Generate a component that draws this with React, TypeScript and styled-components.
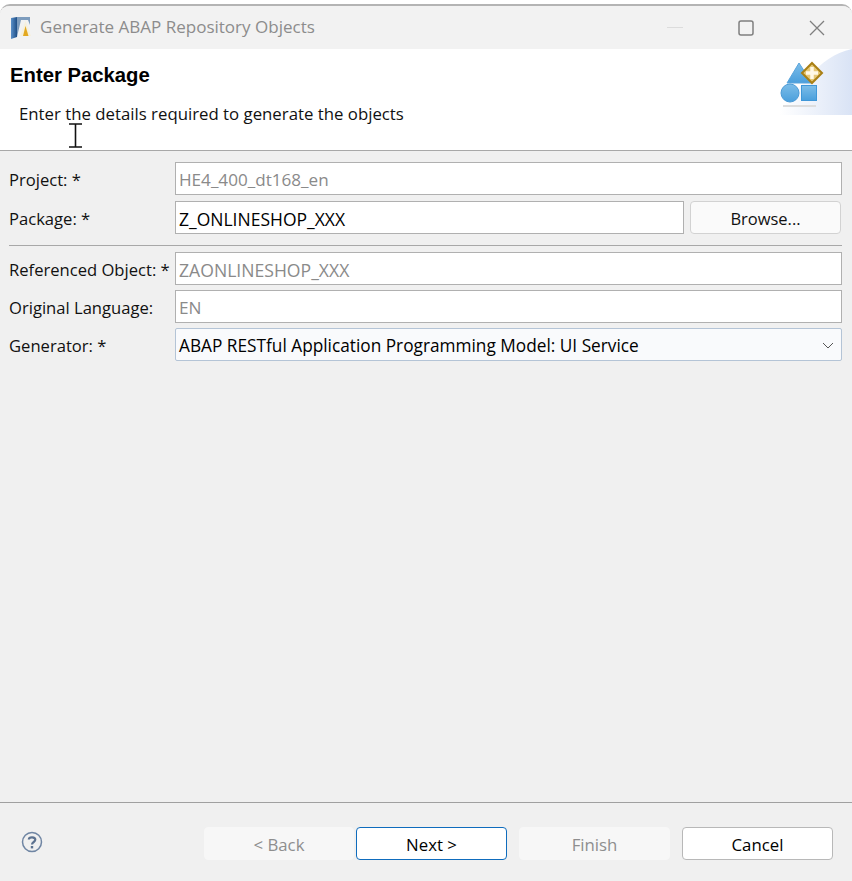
import React from 'react';
import styled, { createGlobalStyle } from 'styled-components';

const GlobalStyle = createGlobalStyle`
  html, body {
    margin: 0;
    padding: 0;
    background: #ffffff;
  }
  body {
    font-family: "Open Sans", "Noto Sans", "Liberation Sans", sans-serif;
  }
`;

const Window = styled.div`
  width: 852px;
  height: 877px;
  margin-top: 4px;
  display: flex;
  flex-direction: column;
  background: #f0f0f0;
  border-top: 2px solid #b4b4b4;
  border-radius: 10px 10px 0 0;
  box-sizing: border-box;
  overflow: hidden;
  position: relative;
`;

const TitleBar = styled.div`
  height: 43px;
  flex: none;
  display: flex;
  align-items: center;
  background: #f2f2f2;
  padding-left: 10px;
`;

const TitleText = styled.div`
  margin-left: 7px;
  margin-top: -2px;
  font-size: 17.05px;
  color: #8c8c8c;
`;

const WindowControls = styled.div`
  margin-left: auto;
  display: flex;
  align-items: center;
`;

const ControlButton = styled.div`
  width: 71px;
  height: 43px;
  display: flex;
  align-items: center;
  justify-content: center;
`;

const Banner = styled.div`
  height: 102px;
  flex: none;
  box-sizing: border-box;
  background: #ffffff;
  border-bottom: 1px solid #a8a8a8;
  padding: 14px 10px 0;
  display: flex;
  position: relative;
`;

const BannerText = styled.div`
  display: flex;
  flex-direction: column;
`;

const BannerTitle = styled.div`
  font-family: "Liberation Sans", Arial, sans-serif;
  font-weight: 700;
  font-size: 20.3px;
  line-height: 24px;
  color: #000000;
`;

const BannerMessage = styled.div`
  margin-top: 15px;
  margin-left: 9px;
  font-size: 16.8px;
  line-height: 24px;
  color: #111111;
`;

const BannerArt = styled.div`
  position: absolute;
  right: 0;
  top: 0;
  width: 76px;
  height: 66px;
`;

const TextCursor = styled.div`
  position: absolute;
  left: 69px;
  top: 74px;
  width: 13px;
  height: 25px;
`;

const Body = styled.div`
  flex: 1;
  display: flex;
  flex-direction: column;
  padding: 11px 10px 0 9px;
`;

const Row = styled.div<{ $gap?: number }>`
  display: flex;
  align-items: center;
  height: 33px;
  margin-bottom: ${(p) => p.$gap ?? 5}px;
`;

const Label = styled.div`
  width: 166px;
  flex: none;
  padding-top: 2px;
  font-size: 16.6px;
  color: #111111;
  white-space: nowrap;
`;

const Field = styled.div<{ $disabled?: boolean; $size?: number }>`
  flex: 1;
  height: 33px;
  box-sizing: border-box;
  display: flex;
  align-items: center;
  padding: 2px 0 0 3px;
  background: #ffffff;
  border: 1px solid #b0b0b0;
  font-size: ${(p) => p.$size ?? 17.2}px;
  color: ${(p) => (p.$disabled ? '#8a8a8a' : '#000000')};
  white-space: nowrap;
`;

const Select = styled(Field)`
  background: #f9fafc;
  border: 1px solid #b4c4d6;
  border-radius: 2px;
  justify-content: space-between;
  padding-right: 7px;
`;

const BrowseButton = styled.div`
  width: 151px;
  height: 33px;
  flex: none;
  margin-left: 6px;
  margin-right: 1px;
  box-sizing: border-box;
  display: flex;
  align-items: center;
  justify-content: center;
  padding-top: 2px;
  background: #fafafa;
  border: 1px solid #d2d2d2;
  border-radius: 4px;
  font-size: 16.5px;
  color: #111111;
`;

const Separator = styled.div`
  height: 1px;
  flex: none;
  background: #a8a8a8;
  margin: 6px 0;
`;

const Footer = styled.div`
  height: 79px;
  flex: none;
  box-sizing: border-box;
  border-top: 1px solid #a0a0a0;
  display: flex;
  align-items: flex-start;
  padding: 24px 0 0 21px;
`;

const HelpIcon = styled.div`
  width: 22px;
  height: 22px;
  flex: none;
  margin-top: 4px;
  margin-right: 161px;
`;

const ActionButton = styled.div<{ $variant?: 'disabled' | 'primary' | 'plain'; $gap?: number; $width?: number }>`
  width: ${(p) => p.$width ?? 151}px;
  height: 33px;
  flex: none;
  box-sizing: border-box;
  margin-left: ${(p) => p.$gap ?? 0}px;
  display: flex;
  align-items: center;
  justify-content: center;
  padding-top: 1px;
  border-radius: 4px;
  font-size: 16.8px;
  background: ${(p) => (p.$variant === 'disabled' ? '#f7f7f7' : '#ffffff')};
  color: ${(p) => (p.$variant === 'disabled' ? '#8e8e8e' : '#000000')};
  border: 1px solid
    ${(p) =>
      p.$variant === 'primary' ? '#0f6cbd' : p.$variant === 'disabled' ? '#f7f7f7' : '#b8b8b8'};
`;

const AppIcon = () => (
  <svg width="23" height="24" viewBox="0 0 23 24">
    <defs>
      <linearGradient id="spine" x1="0" y1="0" x2="1" y2="0">
        <stop offset="0" stopColor="#5a8fc8" />
        <stop offset="1" stopColor="#1f4f86" />
      </linearGradient>
    </defs>
    <path d="M1 2 L7 1 V21 L1 23 Z" fill="url(#spine)" />
    <path d="M7 1 H20 V9 L18 4 H11 L7 21 Z" fill="#7d9cbd" />
    <path d="M15.500 5 L10 20 H21 Z" fill="#f6f0dc" />
    <path d="M15.500 10 L13 20 H18.500 Z" fill="#e3a81f" />
  </svg>
);

const ObjectsArt = () => (
  <svg width="76" height="66" viewBox="0 0 76 66">
    <defs>
      <linearGradient id="sky" x1="0" y1="0" x2="1" y2="0">
        <stop offset="0.05" stopColor="#ffffff" />
        <stop offset="1" stopColor="#d9e3f5" />
      </linearGradient>
      <linearGradient id="blue" x1="0" y1="0" x2="0" y2="1">
        <stop offset="0" stopColor="#7cbde8" />
        <stop offset="1" stopColor="#4a9fdc" />
      </linearGradient>
    </defs>
    <path d="M0 66 C 26 40, 40 8, 76 0 V66 Z" fill="url(#sky)" />
    <path d="M11 34 L 23 14 L 36 34 Z" fill="url(#blue)" stroke="#5aa5dc" />
    <path d="M36 14 L 46 24 L 36 34 L 26 24 Z" fill="#e6c877" stroke="#a97f14" strokeWidth="2" />
    <path d="M36 18 V30 M30 24 H42" stroke="#fff8e6" strokeWidth="3.500" />
    <circle cx="14" cy="44" r="9" fill="url(#blue)" stroke="#4a9ad6" />
    <rect x="25.500" y="36.500" width="15" height="15" fill="url(#blue)" stroke="#3f97d8" />
    <rect x="7" y="56" width="33" height="2" fill="#dddddd" />
  </svg>
);

const CursorIcon = () => (
  <svg width="13" height="25" viewBox="0 0 13 25">
    <path d="M0 1 H13 M0 24 H13 M6.500 1 V24" stroke="#111111" strokeWidth="1.600" fill="none" />
  </svg>
);

const App: React.FC = () => {
  return (
    <>
      <GlobalStyle />
      <Window>
        <TitleBar>
          <AppIcon />
          <TitleText>Generate ABAP Repository Objects</TitleText>
          <WindowControls>
            <ControlButton>
              <svg width="16" height="2" viewBox="0 0 16 2">
                <rect width="16" height="1" fill="#dcdcdc" />
              </svg>
            </ControlButton>
            <ControlButton>
              <svg width="16" height="16" viewBox="0 0 16 16">
                <rect x="1" y="1" width="14" height="14" rx="2" fill="none" stroke="#7f7f7f" strokeWidth="1.500" />
              </svg>
            </ControlButton>
            <ControlButton>
              <svg width="16" height="16" viewBox="0 0 16 16">
                <path d="M1 1 L15 15 M15 1 L1 15" stroke="#7f7f7f" strokeWidth="1.300" />
              </svg>
            </ControlButton>
          </WindowControls>
        </TitleBar>
        <Banner>
          <BannerText>
            <BannerTitle>Enter Package</BannerTitle>
            <BannerMessage>Enter the details required to generate the objects</BannerMessage>
          </BannerText>
          <BannerArt>
            <ObjectsArt />
          </BannerArt>
          <TextCursor>
            <CursorIcon />
          </TextCursor>
        </Banner>
        <Body>
          <Row $gap={6}>
            <Label>Project: *</Label>
            <Field $disabled $size={17.1}>HE4_400_dt168_en</Field>
          </Row>
          <Row $gap={5}>
            <Label>Package: *</Label>
            <Field $size={17.5}>Z_ONLINESHOP_XXX</Field>
            <BrowseButton>Browse...</BrowseButton>
          </Row>
          <Separator />
          <Row>
            <Label>Referenced Object: *</Label>
            <Field $disabled $size={17.6}>ZAONLINESHOP_XXX</Field>
          </Row>
          <Row>
            <Label>Original Language:</Label>
            <Field $disabled>EN</Field>
          </Row>
          <Row>
            <Label>Generator: *</Label>
            <Select $size={17.25}>
              ABAP RESTful Application Programming Model: UI Service
              <svg width="12" height="8" viewBox="0 0 12 8">
                <path d="M1 1 L6 6 L11 1" stroke="#555555" strokeWidth="1" fill="none" />
              </svg>
            </Select>
          </Row>
        </Body>
        <Footer>
          <HelpIcon>
            <svg width="22" height="22" viewBox="0 0 22 22">
              <circle cx="11" cy="11" r="9.500" fill="none" stroke="#6f85a3" strokeWidth="1.500" />
              <path d="M7.800 8.500 C 8 5.500, 14.300 5.500, 14.300 8.800 C 14.300 11, 11 11, 11 13.500" fill="none" stroke="#5c7290" strokeWidth="2.200" />
              <rect x="9.800" y="15" width="2.400" height="2.400" fill="#5c7290" />
            </svg>
          </HelpIcon>
          <ActionButton $variant="disabled" $width={150}>&lt; Back</ActionButton>
          <ActionButton $variant="primary" $gap={2}>Next &gt;</ActionButton>
          <ActionButton $variant="disabled" $gap={12}>Finish</ActionButton>
          <ActionButton $variant="plain" $gap={12}>Cancel</ActionButton>
        </Footer>
      </Window>
    </>
  );
};

export default App;
